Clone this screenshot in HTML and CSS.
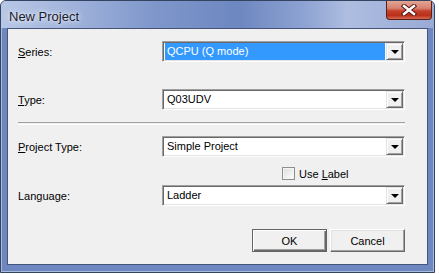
FILE: index.html
```html
<!DOCTYPE html>
<html lang="en">
  <head>
    <meta charset="UTF-8" />
    <meta name="viewport" content="width=device-width, initial-scale=1.0" />
    <title>New Project</title>
    <link rel="stylesheet" href="styles.css">
  </head>
  <body>
    <div class="window">
      <div class="titlebar">
        <span class="title">New Project</span>
        <div class="close">
          <svg width="16" height="12" viewBox="0 0 16 12">
            <path d="M3 2 L13 10 M13 2 L3 10" stroke="#5a1a12" stroke-width="4.4" stroke-linecap="square" />
            <path d="M3 2 L13 10 M13 2 L3 10" stroke="#ffffff" stroke-width="2.4" stroke-linecap="square" />
          </svg>
        </div>
      </div>

      <div class="client">
        <div class="row">
          <label class="label"><u>S</u>eries:</label>
          <div class="combo">
            <span class="value selected">QCPU (Q mode)</span>
            <span class="drop"><i class="arrow"></i></span>
          </div>
        </div>

        <div class="row row-type">
          <label class="label"><u>T</u>ype:</label>
          <div class="combo">
            <span class="value">Q03UDV</span>
            <span class="drop"><i class="arrow"></i></span>
          </div>
        </div>

        <div class="separator"></div>

        <div class="row">
          <label class="label"><u>P</u>roject Type:</label>
          <div class="combo">
            <span class="value">Simple Project</span>
            <span class="drop"><i class="arrow"></i></span>
          </div>
        </div>

        <div class="check-row">
          <span class="checkbox"></span>
          <span class="check-text">Use <u>L</u>abel</span>
        </div>

        <div class="row row-lang">
          <label class="label">Langua<u>g</u>e:</label>
          <div class="combo">
            <span class="value">Ladder</span>
            <span class="drop"><i class="arrow"></i></span>
          </div>
        </div>

        <div class="buttons">
          <button class="btn default">OK</button>
          <button class="btn">Cancel</button>
        </div>
      </div>
    </div>
  </body>
</html>
```

FILE: styles.css
```css
body {
  margin: 0;
  background: #ffffff;
  font-family: "Liberation Sans", Arial, sans-serif;
  font-size: 11px;
  color: #000;
}

.window {
  width: 435px;
  height: 273px;
  box-sizing: border-box;
  border: 1px solid #34435f;
  border-radius: 6px 6px 0 0;
  background: #6f87c0;
  padding: 0 6px 7px 6px;
  display: flex;
  flex-direction: column;
  box-shadow: inset 0 0 0 1px #a9badf;
}

.titlebar {
  height: 27px;
  margin: 0 -6px;
  padding: 0 0 0 8px;
  display: flex;
  align-items: flex-start;
  border-radius: 5px 5px 0 0;
  background: linear-gradient(
    90deg,
    #b8c7e6 0%,
    #a3b5dc 15%,
    #7f97cb 35%,
    #6d87c0 55%,
    #8ea3d3 70%,
    #aebde0 80%,
    #98aad5 100%
  );
}

.title {
  font-size: 13px;
  line-height: 13px;
  margin-top: 9px;
  color: #1a1a2a;
  text-shadow: 0 0 6px #e8eef8, 0 0 3px #e8eef8;
}

.close {
  margin-left: auto;
  margin-right: 2px;
  margin-top: 0;
  width: 46px;
  height: 19px;
  box-sizing: border-box;
  border: 1px solid #5b1f17;
  border-top: none;
  border-radius: 0 0 4px 4px;
  background: linear-gradient(
    180deg,
    #e3a494 0%,
    #d88270 40%,
    #c4412b 55%,
    #bb2f1a 80%,
    #d66a52 100%
  );
  display: flex;
  align-items: center;
  justify-content: center;
}

.client {
  flex: 1;
  box-sizing: border-box;
  border: 1px solid #45557a;
  background: #f0f0f0;
  padding: 12px 0 0 10px;
}

.row {
  display: flex;
  align-items: center;
  height: 21px;
}

.row-type {
  margin-top: 27px;
}

.row-lang {
  margin-top: 5px;
}

.label {
  width: 144px;
  flex-shrink: 0;
}

.combo {
  width: 243px;
  height: 21px;
  box-sizing: border-box;
  display: flex;
  background: #fff;
  border: 1px solid;
  border-color: #a0a0a0 #ffffff #ffffff #a0a0a0;
  box-shadow: inset 1px 1px 0 #696969, inset -1px -1px 0 #e3e3e3;
  padding: 1px 1px 1px 1px;
}

.value {
  flex: 1;
  line-height: 17px;
  padding-left: 2px;
  margin-left: 1px;
  white-space: nowrap;
}

.value.selected {
  background: #3399ff;
  color: #fff;
  margin-right: 1px;
}

.drop {
  width: 17px;
  height: 17px;
  box-sizing: border-box;
  background: #f0f0f0;
  border: 1px solid;
  border-color: #e3e3e3 #696969 #696969 #e3e3e3;
  box-shadow: inset 1px 1px 0 #ffffff, inset -1px -1px 0 #a0a0a0;
  display: flex;
  align-items: center;
  justify-content: center;
}

.arrow {
  width: 0;
  height: 0;
  border-left: 4px solid transparent;
  border-right: 4px solid transparent;
  border-top: 4px solid #000;
  margin-top: 1px;
}

.separator {
  width: 387px;
  height: 1px;
  margin-top: 12px;
  border-top: 1px solid #a0a0a0;
  border-bottom: 1px solid #ffffff;
  margin-bottom: 11px;
}

.check-row {
  display: flex;
  align-items: center;
  height: 13px;
  margin-top: 10px;
  padding-left: 264px;
}

.checkbox {
  width: 13px;
  height: 13px;
  box-sizing: border-box;
  border: 1px solid #8e8f8f;
  background: linear-gradient(135deg, #dcdcdc, #ffffff);
  box-shadow: inset 0 0 0 1px #f4f4f4;
}

.check-text {
  margin-left: 4px;
}

.buttons {
  width: 387px;
  display: flex;
  justify-content: flex-end;
  gap: 3px;
  margin-top: 23px;
}

.btn {
  width: 75px;
  height: 23px;
  box-sizing: border-box;
  font-family: "Liberation Sans", Arial, sans-serif;
  font-size: 11px;
  color: #000;
  background: #f0f0f0;
  border: 1px solid;
  border-color: #ffffff #696969 #696969 #ffffff;
  box-shadow: inset -1px -1px 0 #a0a0a0, inset 1px 1px 0 #e3e3e3;
  padding: 0;
}

.btn.default {
  border-color: #646464;
  box-shadow: inset 1px 1px 0 #ffffff, inset -1px -1px 0 #696969, inset -2px -2px 0 #a0a0a0;
}
```
